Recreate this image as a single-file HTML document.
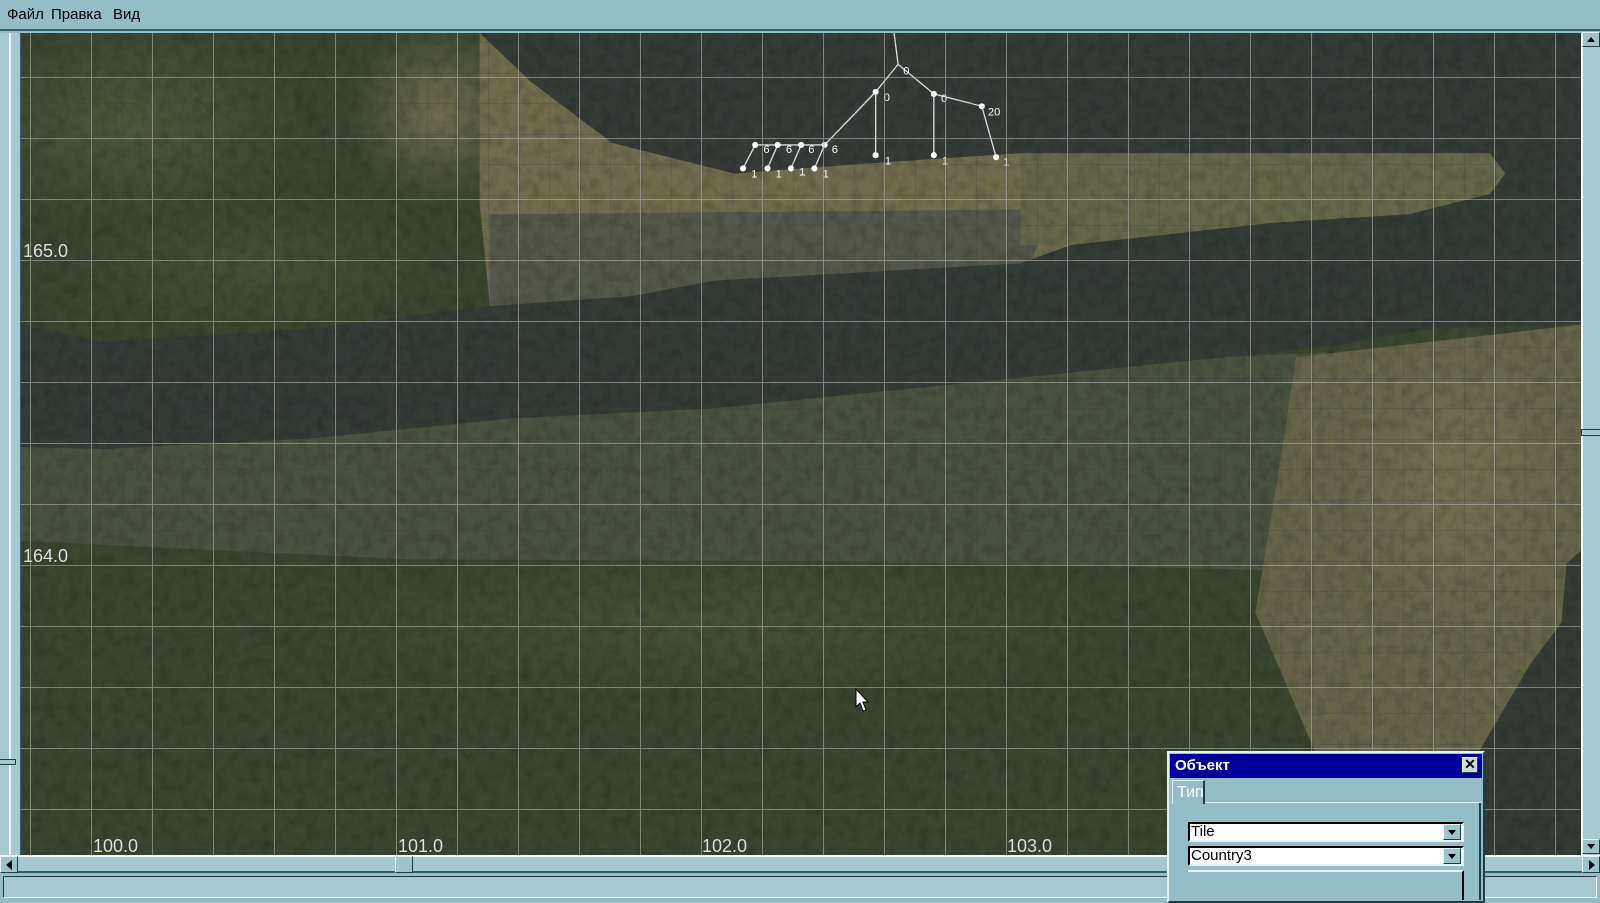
<!DOCTYPE html>
<html><head><meta charset="utf-8"><style>
*{margin:0;padding:0;box-sizing:border-box}
body{width:1600px;height:900px;overflow:hidden;background:#93bec7;font-family:"Liberation Sans",sans-serif;position:relative}
.abs{position:absolute}
#menu{left:0;top:0;width:1600px;height:31px;background:#93bec7;border-bottom:2px solid #2f5f6e;font-size:15px;color:#000}
#menu span{position:absolute;top:6px}
.lbl{position:absolute;color:#e0e0e0;font-size:18px;text-shadow:0 0 1px #222}
.btn{position:absolute;width:18px;height:15px;background:#9cc4cc;border:1px solid;border-color:#e8f4f6 #1d3c46 #1d3c46 #e8f4f6}
.tri{position:absolute;width:0;height:0}
</style></head><body>
<div id="menu" class="abs"><span style="left:7px">Файл</span><span style="left:51px">Правка</span><span style="left:113px">Вид</span></div>
<div class="abs" style="left:0;top:33px;width:21px;height:822px;background:#a4c9d1;border-right:1px solid #2f5f6e"></div>
<div class="abs" style="left:9px;top:33px;width:2px;height:822px;background:#f4fbfc"></div>
<div class="abs" style="left:0;top:759px;width:16px;height:6px;background:#a4c9d1;border:1px solid #1d3c46;border-left:none"></div>

<svg class="abs" style="left:21px;top:33px" width="1560" height="822" viewBox="20.6 32.3 1528.5 805.5" preserveAspectRatio="none">
<defs>
<radialGradient id="lp" cx=".5" cy=".5" r=".5"><stop offset="0" stop-color="#556040" stop-opacity=".7"/><stop offset="1" stop-color="#556040" stop-opacity="0"/></radialGradient>
<radialGradient id="tp" cx=".5" cy=".5" r=".5"><stop offset="0" stop-color="#7e7857" stop-opacity=".8"/><stop offset="1" stop-color="#7e7857" stop-opacity="0"/></radialGradient>
<filter id="n"><feTurbulence type="fractalNoise" baseFrequency=".09" numOctaves="3" seed="3"/><feColorMatrix values="0 0 0 0 0  0 0 0 0 0  0 0 0 0 0  0 0 0 .9 -.35"/></filter>
</defs>
<rect x="0" y="0" width="1600" height="900" fill="#3a452f"/>
<ellipse cx="130" cy="120" rx="170" ry="100" fill="url(#lp)"/>
<ellipse cx="430" cy="110" rx="90" ry="90" fill="url(#tp)"/>
<ellipse cx="250" cy="260" rx="180" ry="60" fill="url(#lp)" opacity=".6"/>
<ellipse cx="700" cy="610" rx="400" ry="70" fill="url(#lp)" opacity=".6"/>
<!-- south town strip -->
<path d="M20,438 L300,430 L500,410 L700,400 L900,380 L1200,350 L1300,345 L1290,560 L1100,555 L800,550 L400,548 L20,530 Z" fill="#4a5240"/>
<!-- right beach -->
<path d="M1270,350 L1549,318 L1549,540 L1535,552 L1530,610 L1500,650 L1450,735 L1290,740 L1230,600 L1250,480 Z" fill="#66654a"/>
<ellipse cx="1430" cy="470" rx="120" ry="150" fill="url(#tp)" opacity=".7"/>
<path d="M1549,540 L1535,552 L1530,610 L1500,650 L1450,735 L1440,838 L1549,838 Z" fill="#363b36"/>
<!-- north strip land -->
<path d="M470,32 L520,80 L600,140 L720,170 L850,160 L1000,150 L1460,150 L1475,170 L1460,190 L1380,210 L1250,218 L1050,240 L1000,258 L700,275 L620,290 L480,300 L470,200 Z" fill="#706c4e"/>
<path d="M480,210 L1030,205 L1010,258 L700,275 L620,290 L480,300 Z" fill="#54574b"/>
<path d="M1000,150 L1460,150 L1475,170 L1460,190 L1380,210 L1250,218 L1050,240 L1000,240 Z" fill="#66684a"/>
<!-- water top -->
<path d="M470,32 L1549,32 L1549,150 L1460,150 L1000,150 L850,160 L720,170 L600,140 L520,80 Z" fill="#363b37"/>
<!-- river -->
<path d="M1460,150 L1549,150 L1549,318 L1400,322 L1300,340 L1200,350 L900,380 L700,400 L500,410 L300,430 L100,440 L20,438 L20,318 L100,335 L300,322 L480,300 L620,290 L700,275 L1000,258 L1050,240 L1250,218 L1380,210 L1460,190 L1475,170 Z" fill="#353b37"/>
<rect x="0" y="0" width="1600" height="900" filter="url(#n)" opacity=".35"/>
<!-- tree structure -->
<g stroke="#ddd" stroke-width="1.3" fill="none">
<path d="M876,32 L880,63 L858,90 L808,142 M880,63 L915,92 L962,104 L976,154 M858,90 L858,152 M915,92 L915,152 M740,142 L808,142 M740,142 L728,165 M762,142 L752,165 M785,142 L775,165 M808,142 L798,165"/>
</g>
<g fill="#fff" font-size="11" font-family="Liberation Sans">
<text x="885" y="73">0</text><text x="866" y="99">0</text><text x="922" y="100">0</text><text x="968" y="113">20</text>
<text x="748" y="150">6</text><text x="770" y="150">6</text><text x="792" y="150">6</text><text x="815" y="150">6</text>
<text x="736" y="174">1</text><text x="760" y="174">1</text><text x="783" y="172">1</text><text x="806" y="174">1</text>
<text x="867" y="161">1</text><text x="923" y="161">1</text><text x="983" y="162">1</text>
</g>
<g fill="#fff"><circle cx="858" cy="90" r="3"/><circle cx="915" cy="92" r="3"/><circle cx="962" cy="104" r="3"/><circle cx="740" cy="142" r="3"/><circle cx="762" cy="142" r="3"/><circle cx="785" cy="142" r="3"/><circle cx="808" cy="142" r="3"/><circle cx="728" cy="165" r="3"/><circle cx="752" cy="165" r="3"/><circle cx="775" cy="165" r="3"/><circle cx="798" cy="165" r="3"/><circle cx="858" cy="152" r="3"/><circle cx="915" cy="152" r="3"/><circle cx="976" cy="154" r="3"/></g>
</svg>

<svg class="abs" style="left:0;top:0" width="1600" height="900">
<defs>
<clipPath id="c"><rect x="21" y="33" width="1560" height="822"/></clipPath>
<pattern id="gd" x="0.5" y="12" width="30.5" height="30.5" patternUnits="userSpaceOnUse"><path d="M0,0 H30.5 M0,0 V30.5" stroke="#3a3c44" stroke-width="1" fill="none"/></pattern>
<pattern id="gb" x="30" y="16" width="61" height="61" patternUnits="userSpaceOnUse"><path d="M0,0.5 H61 M0.5,0 V61" stroke="#b0b0ac" stroke-width="1" fill="none" opacity=".6"/></pattern>
</defs>
<g clip-path="url(#c)"><rect width="1600" height="900" fill="url(#gd)" opacity=".45"/><rect width="1600" height="900" fill="url(#gb)"/></g>
</svg>

<div class="lbl" style="left:93px;top:836px">100.0</div>
<div class="lbl" style="left:398px;top:836px">101.0</div>
<div class="lbl" style="left:702px;top:836px">102.0</div>
<div class="lbl" style="left:1007px;top:836px">103.0</div>
<div class="lbl" style="left:23px;top:241px">165.0</div>
<div class="lbl" style="left:23px;top:546px">164.0</div>

<svg class="abs" style="left:855px;top:688px" width="16" height="26"><path d="M1,1 L1,19 L5,15 L8,23 L11,22 L8,14 L13,14 Z" fill="#fff" stroke="#000" stroke-width="1"/></svg>

<div class="abs" style="left:1581px;top:33px;width:19px;height:822px;background:#a4c9d1;border-left:2px solid #f2fafb"></div>
<div class="btn" style="left:1582px;top:32px"><div class="tri" style="left:4px;top:4px;border-left:4px solid transparent;border-right:4px solid transparent;border-bottom:5px solid #000"></div></div>
<div class="btn" style="left:1582px;top:839px"><div class="tri" style="left:4px;top:4px;border-left:4px solid transparent;border-right:4px solid transparent;border-top:5px solid #000"></div></div>
<div class="abs" style="left:1581px;top:429px;width:19px;height:7px;border:1px solid #1d3c46;border-right:none;background:#a4c9d1"></div>
<div class="abs" style="left:0;top:855px;width:1600px;height:18px;background:#a4c9d1;border-top:2px solid #f4fbfc;border-bottom:2px solid #2f5f6e"></div>
<div class="btn" style="left:0;top:856px;height:17px"><div class="tri" style="left:5px;top:3px;border-top:5px solid transparent;border-bottom:5px solid transparent;border-right:6px solid #000"></div></div>
<div class="btn" style="left:1582px;top:856px;height:17px"><div class="tri" style="left:6px;top:3px;border-top:5px solid transparent;border-bottom:5px solid transparent;border-left:6px solid #000"></div></div>
<div class="abs" style="left:395px;top:856px;width:18px;height:17px;background:#9cc4cc;border:1px solid;border-color:#e8f4f6 #1d3c46 #1d3c46 #e8f4f6"></div>
<div class="abs" style="left:0;top:875px;width:1600px;height:25px;background:#93bec7"></div>
<div class="abs" style="left:3px;top:876px;width:1594px;height:22px;background:#a4c9d1;border:1px solid;border-color:#1d3c46 #f4fbfc #f4fbfc #1d3c46"></div>

<div class="abs" style="left:1167px;top:751px;width:318px;height:152px;background:#93bec7;border:2px solid;border-color:#e6f3f5 #1d3c46 #1d3c46 #e6f3f5"></div>
<div class="abs" style="left:1170px;top:754px;width:312px;height:24px;background:#000099;color:#fff;font-weight:bold;font-size:15px;padding:3px 5px">Объект</div>
<div class="abs" style="left:1462px;top:757px;width:16px;height:16px;background:#c8dde2;border:1px solid;border-color:#fff #1d3c46 #1d3c46 #fff;font-size:14px;font-weight:bold;line-height:13px;text-align:center;color:#000">✕</div>
<div class="abs" style="left:1172px;top:780px;width:33px;height:24px;border-left:1px solid #e6f3f5;border-top:1px solid #e6f3f5;border-right:2px solid #1d3c46;color:#fff;font-size:16px;padding:3px 0 0 4px">Тип</div>
<div class="abs" style="left:1205px;top:802px;width:276px;height:1px;background:#e6f3f5"></div>
<div class="abs" style="left:1479px;top:803px;width:2px;height:97px;background:#1d3c46"></div>
<div class="abs" style="left:1188px;top:822px;width:276px;height:20px;background:#fff;border:2px solid;border-color:#000 #e6f3f5 #e6f3f5 #000;font-size:15px;padding-left:1px;line-height:16px">Tile</div>
<div class="btn" style="left:1443px;top:824px;height:16px;width:18px"><div class="tri" style="left:4px;top:5px;border-left:4px solid transparent;border-right:4px solid transparent;border-top:5px solid #000"></div></div>
<div class="abs" style="left:1188px;top:846px;width:276px;height:20px;background:#fff;border:2px solid;border-color:#000 #e6f3f5 #e6f3f5 #000;font-size:15px;padding-left:1px;line-height:16px">Country3</div>
<div class="btn" style="left:1443px;top:848px;height:16px;width:18px"><div class="tri" style="left:4px;top:5px;border-left:4px solid transparent;border-right:4px solid transparent;border-top:5px solid #000"></div></div>
<div class="abs" style="left:1188px;top:870px;width:276px;height:30px;border-top:2px solid #e6f3f5;border-right:2px solid #000"></div>
</body></html>
